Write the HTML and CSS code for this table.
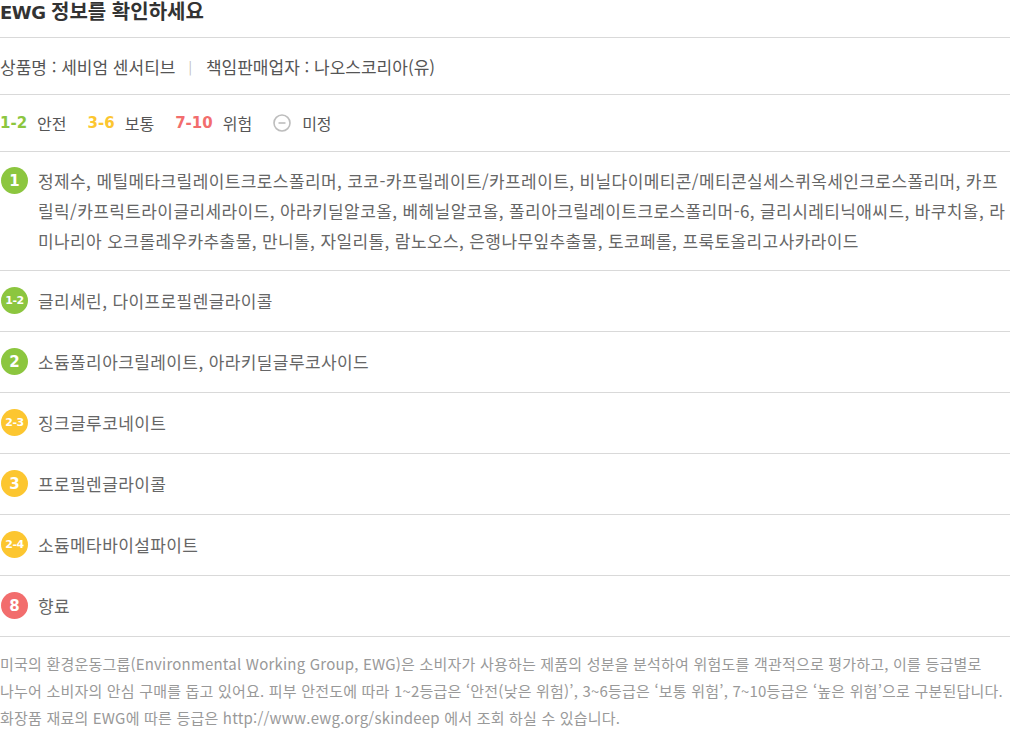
FILE: index.html
```html
<!DOCTYPE html>
<html lang="ko">
<head>
    <meta charset="utf-8">
    <title>EWG 정보</title>
    <link rel="stylesheet" href="styles.css">
</head>
<body>
    <div class="ewg">
        <h2 class="ewg-title"><span class="latin">EWG</span> 정보를 확인하세요</h2>

        <div class="row product">
            <span>상품명 : 세비엄 센서티브</span>
            <span class="sep">|</span>
            <span>책임판매업자 : 나오스코리아(유)</span>
        </div>

        <div class="row legend">
            <span class="num green">1-2</span><span class="lbl">안전</span>
            <span class="num yellow">3-6</span><span class="lbl">보통</span>
            <span class="num red">7-10</span><span class="lbl">위험</span>
            <svg class="none-icon" width="18" height="18" viewBox="0 0 18 18">
                <circle cx="9" cy="9" r="8" fill="none" stroke="#bdbdbd" stroke-width="1.6"/>
                <line x1="5.5" y1="9" x2="12.5" y2="9" stroke="#bdbdbd" stroke-width="1.6"/>
            </svg>
            <span class="lbl">미정</span>
        </div>

        <ul class="grades">
            <li class="row item first">
                <span class="badge green">1</span>
                <p>정제수, 메틸메타크릴레이트크로스폴리머, 코코-카프릴레이트/카프레이트, 비닐다이메티콘/메티콘실세스퀴옥세인크로스폴리머, 카프릴릭/카프릭트라이글리세라이드, 아라키딜알코올, 베헤닐알코올, 폴리아크릴레이트크로스폴리머-6, 글리시레티닉애씨드, 바쿠치올, 라미나리아 오크롤레우카추출물, 만니톨, 자일리톨, 람노오스, 은행나무잎추출물, 토코페롤, 프룩토올리고사카라이드</p>
            </li>
            <li class="row item">
                <span class="badge green small">1-2</span>
                <p>글리세린, 다이프로필렌글라이콜</p>
            </li>
            <li class="row item">
                <span class="badge green">2</span>
                <p>소듐폴리아크릴레이트, 아라키딜글루코사이드</p>
            </li>
            <li class="row item">
                <span class="badge yellow small">2-3</span>
                <p>징크글루코네이트</p>
            </li>
            <li class="row item">
                <span class="badge yellow">3</span>
                <p>프로필렌글라이콜</p>
            </li>
            <li class="row item">
                <span class="badge yellow small">2-4</span>
                <p>소듐메타바이설파이트</p>
            </li>
            <li class="row item">
                <span class="badge red">8</span>
                <p>향료</p>
            </li>
        </ul>

        <p class="note">미국의 환경운동그룹(Environmental Working Group, EWG)은 소비자가 사용하는 제품의 성분을 분석하여 위험도를 객관적으로 평가하고, 이를 등급별로<br>나누어 소비자의 안심 구매를 돕고 있어요. 피부 안전도에 따라 1~2등급은 ‘안전(낮은 위험)’, 3~6등급은 ‘보통 위험’, 7~10등급은 ‘높은 위험’으로 구분된답니다.<br>화장품 재료의 EWG에 따른 등급은 http://www.ewg.org/skindeep 에서 조회 하실 수 있습니다.</p>
    </div>
</body>
</html>
```

FILE: styles.css
```css
body {
    margin: 0;
    padding: 0;
    background: #ffffff;
    font-family: "Noto Sans CJK KR", "Noto Sans", sans-serif;
    color: #666666;
}
.ewg {
    width: 1010px;
}
.ewg-title {
    margin: 0;
    height: 37px;
    font-size: 20px;
    line-height: 22px;
    font-weight: 700;
    color: #333333;
    border-bottom: 1px solid #d9d9d9;
}
.ewg-title .latin {
    font-family: "DejaVu Sans", sans-serif;
    font-size: 18px;
    letter-spacing: -0.5px;
}
.row {
    border-bottom: 1px solid #d9d9d9;
}
.product {
    display: flex;
    align-items: center;
    height: 56px;
    font-size: 17px;
    color: #555555;
}
.product .sep {
    color: #bbbbbb;
    font-size: 13px;
    margin: 0 14px 0 13px;
}
.legend {
    display: flex;
    align-items: center;
    height: 56px;
    font-size: 16px;
}
.num {
    font-family: "DejaVu Sans", sans-serif;
    font-size: 15px;
    font-weight: 700;
    margin-right: 10px;
}
.lbl {
    color: #555555;
    margin-right: 21px;
}
.none-icon {
    margin-right: 11px;
}
.green { color: #8cc63f; }
.yellow { color: #fcc630; }
.red { color: #f26d6d; }
.grades {
    list-style: none;
    margin: 0;
    padding: 0;
}
.item {
    display: flex;
    align-items: flex-start;
    padding: 15px 0 15px 0;
}
.item.first {
    padding: 14px 0 14px 0;
}
.item p {
    margin: 0;
    font-size: 17px;
    letter-spacing: 0.4px;
    line-height: 30px;
    color: #666666;
    flex: 1;
}
.badge {
    flex: none;
    width: 27px;
    height: 27px;
    border-radius: 50%;
    margin: 1px 10px 0 1px;
    display: flex;
    align-items: center;
    justify-content: center;
    color: #ffffff;
    font-family: "DejaVu Sans", sans-serif;
    font-weight: 700;
    font-size: 15px;
}
.badge.small {
    font-size: 11px;
    letter-spacing: -0.5px;
}
.badge.green { background: #8cc63f; }
.badge.yellow { background: #fcc630; }
.badge.red { background: #f26d6d; }
.note {
    margin: 0;
    padding-top: 13px;
    font-size: 15px;
    letter-spacing: 0.2px;
    line-height: 27px;
    color: #999999;
    white-space: nowrap;
}
```
